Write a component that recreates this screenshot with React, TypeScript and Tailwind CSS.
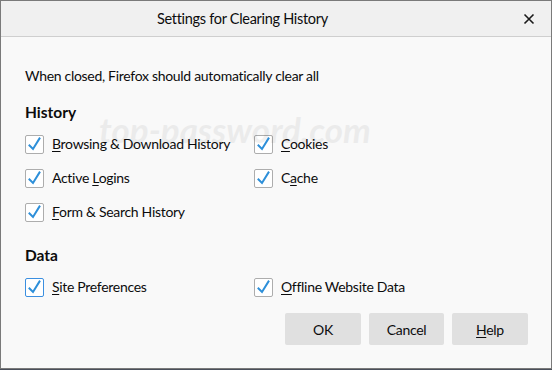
import React from "react";

const font = { fontFamily: 'Lato, "Noto Sans", sans-serif' };

function Check({ focused = false }: { focused?: boolean }) {
  return (
    <div
      className={`w-[19px] h-[19px] rounded-[2px] border bg-white flex items-center justify-center shrink-0 ${
        focused ? "border-[#3b8fe0]" : "border-[#adadad]"
      }`}
    >
      <svg width="17" height="17" viewBox="0 0 17 17">
        <path d="M3.5 9.5 L7 13 L13.5 2.5" fill="none" stroke="#2d8fd9" strokeWidth="2" strokeLinecap="square" strokeLinejoin="miter" />
      </svg>
    </div>
  );
}

function Item({ k, rest, pre = "", focused = false }: { k: string; rest: string; pre?: string; focused?: boolean }) {
  return (
    <div className="flex items-center h-[24px] gap-[8px]">
      <Check focused={focused} />
      <span className="text-[14px] tracking-[-0.3px] text-[#0c0c0d] leading-none">
        {pre}
        <span className="underline underline-offset-[2px]">{k}</span>
        {rest}
      </span>
    </div>
  );
}

export default function App() {
  return (
    <div className="w-[552px] h-[370px] bg-[#4a4f5a]" style={font}>
      <div className="relative w-[552px] h-[369px] border border-[#7a7a7a] bg-[#f9f9f9] flex flex-col overflow-hidden">
        <div className="h-[36px] shrink-0 bg-[#f0f0f0] border-b border-[#cfcfcf] flex items-center pl-[156px] pr-[16px]">
          <div className="text-[14.5px] tracking-[-0.3px] text-[#0c0c0d] leading-[20px]">Settings for Clearing History</div>
          <svg className="ml-auto" width="12" height="12" viewBox="0 0 12 12">
            <path d="M1.5 1.5 L10.5 10.5 M10.5 1.5 L1.5 10.5" stroke="#1a1a1a" strokeWidth="1.6" />
          </svg>
        </div>

        <div className="flex flex-col pl-[24px] pr-[23px] pt-[28px]">
          <div className="h-[20px] flex items-center text-[14px] tracking-[-0.3px] text-[#0c0c0d]">
            When closed, Firefox should automatically clear all
          </div>

          <div className="mt-[17px] h-[22px] flex items-center text-[15.5px] font-bold text-[#0c0c0d]">History</div>

          <div className="mt-[8px] grid grid-cols-[229px_1fr] gap-y-[10px]">
            <Item k="B" rest="rowsing & Download History" />
            <Item k="C" rest="ookies" />
            <Item pre="Active " k="L" rest="ogins" />
            <Item pre="C" k="a" rest="che" />
            <Item k="F" rest="orm & Search History" />
            <div />
          </div>

          <div className="mt-[21px] h-[22px] flex items-center text-[15.5px] font-bold text-[#0c0c0d]">Data</div>

          <div className="mt-[8px] grid grid-cols-[229px_1fr]">
            <Item k="S" rest="ite Preferences" focused />
            <Item k="O" rest="ffline Website Data" />
          </div>

          <div className="mt-[14px] flex justify-end gap-[8px]">
            <button className="w-[76px] h-[32px] rounded-[2px] bg-[#e0e0e0] text-[14px] tracking-[-0.3px] text-[#0c0c0d]">OK</button>
            <button className="w-[75px] h-[32px] rounded-[2px] bg-[#e0e0e0] text-[14px] tracking-[-0.3px] text-[#0c0c0d]">Cancel</button>
            <button className="w-[76px] h-[32px] rounded-[2px] bg-[#e0e0e0] text-[14px] tracking-[-0.3px] text-[#0c0c0d]">
              <span className="underline underline-offset-[2px]">H</span>elp
            </button>
          </div>
        </div>

        <div className="pointer-events-none absolute left-[98px] top-[111px] text-[35px] font-bold italic text-[#0c0c0d] opacity-[0.055] leading-none">
          top-password.com
        </div>
      </div>
    </div>
  );
}
